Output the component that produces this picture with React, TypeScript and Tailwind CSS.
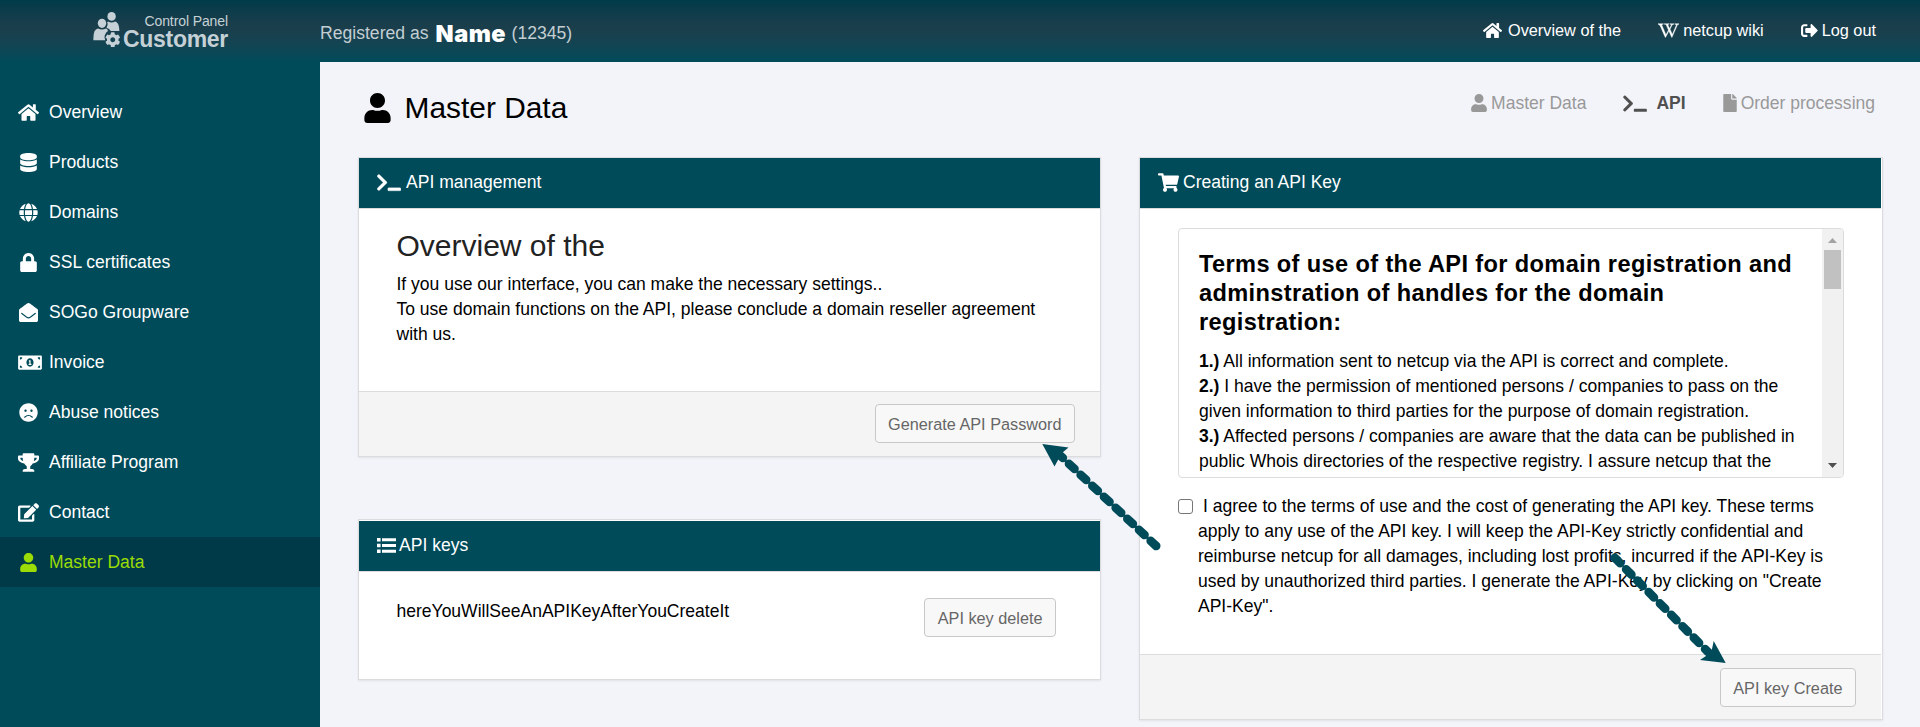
import React from "react";
import {
  FaHome, FaDatabase, FaGlobe, FaLock, FaEnvelopeOpen, FaMoneyBillAlt, FaFrown, FaTrophy, FaEdit,
  FaUser, FaTerminal, FaWikipediaW, FaSignOutAlt, FaFile, FaShoppingCart, FaCog,
} from "react-icons/fa";

const menu = [
  { icon: FaHome, label: "Overview", cls: "w-[21px]" },
  { icon: FaDatabase, label: "Products", cls: "w-[17px]" },
  { icon: FaGlobe, label: "Domains", cls: "w-[19px]" },
  { icon: FaLock, label: "SSL certificates", cls: "w-[17px]" },
  { icon: FaEnvelopeOpen, label: "SOGo Groupware", cls: "w-[19px]" },
  { icon: FaMoneyBillAlt, label: "Invoice", cls: "w-[24px] -mr-[3px]" },
  { icon: FaFrown, label: "Abuse notices", cls: "w-[19px]" },
  { icon: FaTrophy, label: "Affiliate Program", cls: "w-[21px]" },
  { icon: FaEdit, label: "Contact", cls: "w-[21px]" },
  { icon: FaUser, label: "Master Data", cls: "w-[17px]", active: true },
];

function Header() {
  return (
    <header className="flex h-[62px] shrink-0 bg-linear-to-b from-[#003b49] via-[#1b3e4c] via-45% to-[#004b5a]">
      <div className="flex w-80 shrink-0 pl-[93px] pt-[12px] text-[#c5d1d6]">
        <div className="relative h-[36px] w-[29px]">
          <svg viewBox="0 0 28 36" className="h-[36px] w-[28px]" fill="currentColor">
            <ellipse cx="18.600" cy="4.400" rx="4.200" ry="4.400" />
            <path d="M15 9.500q3.600 2 7.200 0 4 .8 4.200 9.500h-8.500q-1.500-2.500-4.400-3.300 2-4.500.5-5.200z" />
            <ellipse cx="9" cy="11.300" rx="4.200" ry="4.600" />
            <path d="M5 16.500q4 2 8 0 1.500.4 2 2.500-3.500 2.500-3.500 6.500l.8 2.800h-11.900q-.5-11 4.600-11.800z" />
          </svg>
          <FaCog className="absolute left-[11.500px] top-[19.500px] h-[15.500px] w-[15.500px]" />
        </div>
        <div className="flex w-[106px] flex-col items-end whitespace-nowrap">
          <div className="mt-[2px] text-[14px] leading-[14px] tracking-[-0.100px]">Control Panel</div>
          <div className="text-[23px] font-bold leading-[22px] tracking-[-0.300px]">Customer</div>
        </div>
      </div>
      <div className="flex h-[62px] flex-1 items-center pr-[44px]">
        <div className="flex items-baseline pt-px text-[17.600px] text-[#c3ced3]">
          <span>Registered as</span>
          <span className="relative top-[3px] ml-[7px] w-[76px] font-['Inter'] text-[23.500px] font-black leading-[28px] tracking-[0.500px] text-white">Name</span>
          <span>(12345)</span>
        </div>
        <nav className="-mt-[2px] ml-auto flex items-center text-[16.300px] text-white">
          <a className="flex items-center gap-[6px]"><FaHome className="h-[17px] w-[19px]" />Overview of the</a>
          <a className="ml-[37px] flex items-center gap-[4px]"><FaWikipediaW className="h-[17px] w-[21px] stroke-white [stroke-width:12px]" />netcup wiki</a>
          <a className="ml-[37px] flex items-center gap-[4px]"><FaSignOutAlt className="h-[17px] w-[17px]" />Log out</a>
        </nav>
      </div>
    </header>
  );
}

function Sidebar() {
  return (
    <aside className="w-80 shrink-0 bg-[#004b5a] pt-[25px] text-[17.550px]">
      {menu.map(({ icon: Icon, label, cls, active }) => (
        <div key={label} className={"flex h-[50px] items-center pl-[18px] " + (active ? "bg-[#003a48] text-[#9bdc06]" : "text-white")}>
          <span className="mr-[10px] flex w-[21px] justify-center"><Icon className={"h-[19px] shrink-0 " + cls} /></span>
          {label}
        </div>
      ))}
    </aside>
  );
}

function ListIcon() {
  return (
    <svg viewBox="0 0 19 15" className="h-[15px] w-[19px]" fill="currentColor">
      <path d="M0 0h3.600v3.600H0zM5 .3h14v3H5zM0 5.700h3.600v3.600H0zM5 6h14v3H5zM0 11.400h3.600v3.600H0zM5 11.700h14v3H5z" />
    </svg>
  );
}

function Button({ children }: { children: React.ReactNode }) {
  return (
    <button className="h-[39px] whitespace-nowrap rounded-[4px] border border-[#c8c8c8] bg-[#f8f8f8] px-[12.500px] pt-px text-[16.250px] text-[#666]">
      {children}
    </button>
  );
}

const card = "flex flex-col border border-[#dcdcde] bg-white shadow-[0_1px_2px_rgba(0,0,0,0.08)]";
const cardHead = "flex h-[51px] shrink-0 items-center border-b border-[#dcdcde] bg-[#004b5a] pb-[2px] text-[17.550px] text-white";

export default function App() {
  return (
    <div className="relative flex h-[727px] w-[1920px] flex-col overflow-hidden bg-[#f3f4f9] font-['Liberation_Sans',Arial,sans-serif] text-[17.530px] leading-[25px] text-black">
      <Header />
      <div className="flex min-h-0 flex-1">
        <Sidebar />
        <main className="flex-1 pl-[38px] pr-[37px]">
          <div className="flex h-[95px] justify-between pl-[6px] pr-[8px]">
            <h1 className="flex h-[92px] items-center gap-[13.500px] text-[29.900px] leading-[34px]">
              <FaUser className="h-[30px] w-[27px]" />Master Data
            </h1>
            <div className="flex h-[82px] items-center text-[#999]">
              <span className="flex items-center gap-[4px]"><FaUser className="h-[18px] w-[16px]" />Master Data</span>
              <span className="ml-[37px] flex items-center gap-[9px] font-bold text-[#505050]"><FaTerminal className="h-[19px] w-[24px]" />API</span>
              <span className="ml-[37px] flex items-center gap-[4px]"><FaFile className="h-[18px] w-[14px]" />Order processing</span>
            </div>
          </div>
          <div className="flex items-start gap-[38px]">
            <div className="w-[743px]">
              <section className={card + " h-[300px]"}>
                <div className={cardHead + " gap-[5px] pl-[18px]"}><FaTerminal className="h-[19px] w-[24px] stroke-white [stroke-width:8px]" />API management</div>
                <div className="flex-1 pl-[37.500px] pt-[18px]">
                  <h2 className="mb-[8px] text-[30px] leading-[37px] text-[#222]">Overview of the</h2>
                  <p>If you use our interface, you can make the necessary settings..</p>
                  <p>To use domain functions on the API, please conclude a domain reseller agreement<br />with us.</p>
                </div>
                <div className="flex h-[65px] justify-end border-t border-[#dcdcde] bg-[#f4f4f4] pr-[25px] pt-[12px]"><Button>Generate API Password</Button></div>
              </section>
              <section className={card + " mt-[62px] h-[161px] pt-px"}>
                <div className={cardHead + " gap-[3px] pl-[18px]"}><ListIcon />API keys</div>
                <div className="flex justify-between pl-[37.500px] pr-[44px] pt-[26px]"><span className="pt-px">hereYouWillSeeAnAPIKeyAfterYouCreateIt</span><Button>API key delete</Button></div>
              </section>
            </div>
            <section className={card + " h-[563px] w-[744px]"}>
              <div className={cardHead + " mr-px gap-[4px] pl-[18px]"}><FaShoppingCart className="h-[19px] w-[21px]" />Creating an API Key</div>
              <div className="flex-1 pl-[38px] pr-[38px] pt-[19px]">
                <div className="flex h-[250px] w-[666px] overflow-hidden rounded-[4px] border border-[#dcdcde]">
                  <div className="flex-1 pl-[20px] pt-[21px]">
                    <h3 className="mb-[12px] whitespace-nowrap text-[23.600px] font-bold leading-[29.120px] tracking-[0.370px]">Terms of use of the API for domain registration and<br />adminstration of handles for the domain<br />registration:</h3>
                    <p className="whitespace-nowrap"><b>1.)</b> All information sent to netcup via the API is correct and complete.<br /><b>2.)</b> I have the permission of mentioned persons / companies to pass on the<br />given information to third parties for the purpose of domain registration.<br /><b>3.)</b> Affected persons / companies are aware that the data can be published in<br />public Whois directories of the respective registry. I assure netcup that the</p>
                  </div>
                  <div className="flex w-[21px] flex-col items-center bg-[#f1f1f1] pb-[9px] pt-[9px]">
                    <svg viewBox="0 0 9 5" className="h-[5px] w-[9px] fill-[#a3a3a3]"><path d="M0 5L4.500 0L9 5z" /></svg>
                    <div className="mt-[7px] h-[39px] w-[17px] bg-[#c1c1c1]" />
                    <svg viewBox="0 0 9 5" className="mt-auto h-[5px] w-[9px] fill-[#505050]"><path d="M0 0L4.500 5L9 0z" /></svg>
                  </div>
                </div>
                <div className="flex pt-[16px]">
                  <input type="checkbox" className="mt-[5px] h-[15px] w-[15px] shrink-0 appearance-none rounded-[3px] border border-[#767676] bg-white" />
                  <p className="whitespace-nowrap pl-[5px] indent-[5px]">I agree to the terms of use and the cost of generating the API key. These terms<br />apply to any use of the API key. I will keep the API-Key strictly confidential and<br />reimburse netcup for all damages, including lost profits, incurred if the API-Key is<br />used by unauthorized third parties. I generate the API-Key by clicking on "Create<br />API-Key".</p>
                </div>
              </div>
              <div className="mr-px flex h-[65px] shrink-0 justify-end border-t border-[#dcdcde] bg-[#f4f4f4] pr-[25px] pt-[13px]"><Button>API key Create</Button></div>
            </section>
          </div>
        </main>
      </div>
      <svg className="pointer-events-none absolute left-0 top-0 h-[727px] w-[1920px]" viewBox="0 0 1920 727" fill="#004b5a">
        <g stroke="#004b5a" strokeWidth="8.600" strokeLinecap="round" strokeDasharray="7.600 8.440">
          <path fill="none" d="M1156.200 546L1060 455.300" />
          <path fill="none" d="M1614.800 557.800L1708 652" />
        </g>
        <path d="M1042.300 444L1068.500 447.500L1062 453L1058 460L1054.500 466.500Z" />
        <path d="M1725.700 663L1713.700 641L1712 649L1706 656L1700 660Z" />
      </svg>
    </div>
  );
}
